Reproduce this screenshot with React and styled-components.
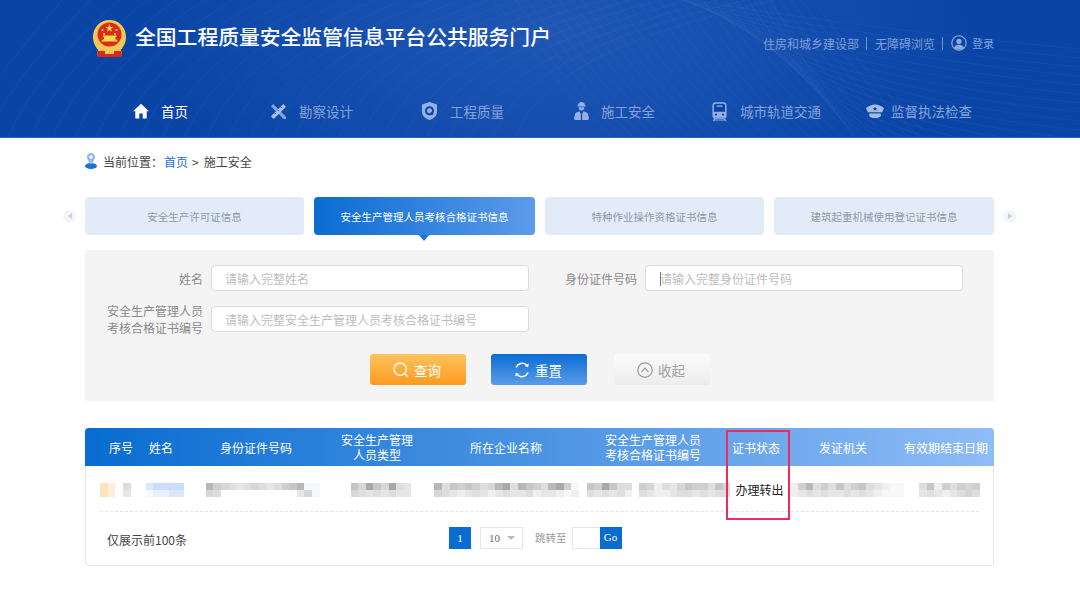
import React from 'react';
import styled, {createGlobalStyle} from 'styled-components';

const GlobalStyle = createGlobalStyle`
  html, body { margin: 0; padding: 0; background: #fff; }
  body { font-family: "Noto Sans CJK SC", "Liberation Sans", sans-serif; color: #333; }
  * { box-sizing: border-box; }
`;

const Page = styled.div`
  width: 1080px;
  height: 592px;
  overflow: hidden;
`;

// 顶部
const Header = styled.header`
  position: relative;
  height: 138px;
  overflow: hidden;
  background: radial-gradient(ellipse 420px 200px at 560px 30px, #2057b5 0%, rgba(32, 87, 181, 0) 100%), #0a45a6;
  border-bottom: 1px solid #2266c4;
`;
const Arcs = styled.svg`
  position: absolute;
  left: 0;
  top: 0;
  pointer-events: none;
`;
const TopBar = styled.div`
  position: relative;
  display: flex;
  align-items: flex-start;
  height: 91px;
  padding: 19px 86px 0 92px;
`;
const Title = styled.h1`
  margin: 3px 0 0 8px;
  font-size: 20.8px;
  line-height: 28px;
  font-weight: 500;
  color: #fff;
  white-space: nowrap;
`;
const TopLinks = styled.div`
  margin: 15px 0 0 auto;
  display: flex;
  align-items: center;
  height: 18px;
  font-size: 12px;
  color: #7f9fd6;
  white-space: nowrap;
`;
const Sep = styled.span`
  width: 1px;
  height: 13px;
  margin: 0 8px 0 7px;
  background: #6f92cf;
`;
const Login = styled.span`
  font-size: 11px;
  margin-left: 5px;
`;
const Nav = styled.nav`
  position: relative;
  display: flex;
  padding-left: 133px;
`;
const NavItem = styled.a`
  display: flex;
  align-items: center;
  width: ${p => p.$w}px;
  height: 40px;
  font-size: 13.5px;
  color: ${p => (p.$active ? '#fff' : '#86a4dc')};
  white-space: nowrap;
  svg {
    flex: none;
    margin-right: ${p => p.$gap}px;
  }
`;

// 面包屑
const Crumb = styled.div`
  display: flex;
  align-items: center;
  height: 18px;
  margin: 14px 0 0 85px;
  font-size: 12px;
  color: #444;
  svg { margin-right: 6px; }
`;
const CrumbLink = styled.a`
  color: #1a6fd0;
  margin: 0 4px 0 1px;
`;
const CrumbSep = styled.span`
  margin-right: 5px;
`;

// 选项卡
const TabRow = styled.div`
  display: flex;
  align-items: center;
  margin: 27px 0 0 63px;
`;
const Arrow = styled.span`
  flex: none;
  width: 13px;
  height: 13px;
  border-radius: 50%;
  background: #f3f5f9;
  display: flex;
  align-items: center;
  justify-content: center;
  margin: ${p => (p.$right ? '0 0 0 9px' : '0 9px 0 0')};
  &::before {
    content: '';
    border-style: solid;
    border-width: 3.5px 0 3.5px 4px;
    border-color: transparent transparent transparent #c6cede;
    transform: ${p => (p.$right ? 'none' : 'rotate(180deg)')};
  }
`;
const Tabs = styled.div`
  display: flex;
  gap: 10px;
`;
const Tab = styled.div`
  position: relative;
  width: ${p => p.$w}px;
  height: 38px;
  display: flex;
  align-items: center;
  justify-content: center;
  border-radius: 4px;
  font-size: 10.5px;
  color: ${p => (p.$active ? '#fff' : '#8f98a6')};
  background: ${p => (p.$active ? 'linear-gradient(90deg, #0a6cd2, #5c9aea)' : '#e2ecf9')};
  ${p => p.$active && `
    &::after {
      content: '';
      position: absolute;
      left: 105px;
      top: 38px;
      border-style: solid;
      border-width: 6px 5px 0 5px;
      border-color: #1b74d6 transparent transparent transparent;
    }
  `}
`;

// 查询表单
const Filter = styled.section`
  width: 909px;
  height: 151px;
  margin: 15px 0 0 85px;
  padding-top: 15px;
  background: #f4f4f4;
`;
const FormRow = styled.div`
  display: flex;
  margin-bottom: 11px;
`;
const Field = styled.label`
  display: flex;
  align-items: center;
  width: ${p => p.$w}px;
`;
const Label = styled.span`
  flex: none;
  width: ${p => p.$w}px;
  margin-right: 8px;
  text-align: right;
  font-size: 12px;
  line-height: 17px;
  color: #8a8a8a;
`;
const Input = styled.div`
  position: relative;
  width: 318px;
  height: 26px;
  padding-left: ${p => p.$pad}px;
  display: flex;
  align-items: center;
  background: #fff;
  border: 1px solid #dcdcdc;
  border-radius: 4px;
  font-size: 12px;
  color: #bdbdbd;
  white-space: nowrap;
`;
const Caret = styled.i`
  position: absolute;
  left: 14px;
  top: 6px;
  width: 1px;
  height: 14px;
  background: #777;
`;
const Buttons = styled.div`
  display: flex;
  margin: 18px 0 0 285px;
`;
const Button = styled.button`
  width: 96px;
  height: 31px;
  margin-right: ${p => p.$mr}px;
  padding: 0 2px 0 0;
  display: flex;
  align-items: center;
  justify-content: center;
  gap: 5px;
  border: 0;
  border-radius: 3px;
  font: inherit;
  font-size: 13.5px;
  color: ${p => p.$color};
  background: ${p => p.$bg};
`;

// 表格
const Card = styled.section`
  position: relative;
  width: 909px;
  height: 138px;
  margin: 27px 0 0 85px;
  border: 1px solid #e6e6e6;
  border-top: 0;
  border-radius: 4px;
`;
const THead = styled.div`
  display: grid;
  grid-template-columns: 40px 40px 150px 92px 166px 128px 78px 96px 103px;
  margin: 0 -1px;
  height: 38px;
  align-items: center;
  padding-left: 16px;
  border-radius: 4px 4px 0 0;
  background: linear-gradient(90deg, #086cd0, #8fbcf6);
  color: #fff;
  font-size: 12px;
  line-height: 15px;
  text-align: center;
`;
const Th = styled.div`
  ${p => p.$last && 'text-align: right; padding-right: 6px; white-space: nowrap;'}
`;
const TRow = styled.div`
  display: flex;
  align-items: center;
  height: 46px;
  margin: 0 14px;
  border-bottom: 1px dashed #e3e3e3;
`;
const Mosaic = styled.div`
  display: grid;
  flex: none;
  grid-template-columns: repeat(${p => p.$n}, 7.6px);
  grid-auto-rows: 7px;
  margin-left: ${p => p.$ml}px;
  margin-top: 2px;
`;
const Pixel = styled.i.attrs(p => ({style: {background: p.$c}}))`
  display: block;
`;
const Status = styled.span`
  flex: none;
  margin: 2px 0 0 5px;
  width: 49px;
  font-size: 12px;
  color: #222;
  white-space: nowrap;
`;
const TFoot = styled.div`
  display: flex;
  align-items: center;
  height: 53px;
  padding-left: 21px;
`;
const Count = styled.span`
  width: 342px;
  margin-top: 2px;
  font-size: 12px;
  color: #444;
  white-space: nowrap;
`;
const PageNo = styled.span`
  width: 22px;
  height: 22px;
  margin-top: -2px;
  background: #086cd0;
  color: #fff;
  font: 11px/22px "Liberation Serif", serif;
  text-align: center;
`;
const PageSize = styled.span`
  width: 43px;
  height: 22px;
  margin: -2px 12px 0 9px;
  padding-left: 8px;
  display: flex;
  align-items: center;
  border: 1px solid #e6e6e6;
  font: 11px "Liberation Serif", serif;
  color: #666;
  &::after {
    content: '';
    margin-left: 7px;
    border-style: solid;
    border-width: 4px 4px 0 4px;
    border-color: #a8bdd8 transparent transparent transparent;
  }
`;
const Jump = styled.span`
  margin: -2px 5px 0 0;
  font-size: 10.5px;
  color: #999;
  white-space: nowrap;
`;
const JumpInput = styled.span`
  width: 28px;
  height: 22px;
  margin-top: -2px;
  border: 1px solid #e6e6e6;
  border-right: 0;
`;
const GoBtn = styled.span`
  width: 22px;
  height: 22px;
  margin-top: -2px;
  background: #086cd0;
  color: #fff;
  font: 11px/21px "Liberation Serif", serif;
  text-align: center;
`;
const Highlight = styled.div`
  position: absolute;
  left: 640px;
  top: 2px;
  width: 64px;
  height: 90px;
  border: 2px solid #ee2b5c;
  pointer-events: none;
`;

const shade = {
  a: '#f8f8f9', b: '#efefef', c: '#e6e6e6', d: '#dedede', e: '#d6d6d6',
  f: '#cfcfcf', g: '#c6c6c6', h: '#b8b8b8', i: '#a8a8a8', j: '#9a9a9a', w: '#ffffff',
  o: '#fde3bd', p: '#fdeedb', q: '#c9def8', r: '#dbe8fa', s: '#e9f1fc', t: '#f5f9fe'
};

const Blur = ({rows, ml}) => {
  const n = rows[0].length;
  return (
    <Mosaic $n={n} $ml={ml}>
      {rows.join('').split('').map((k, i) => (
        <Pixel key={i} $c={shade[k]} />
      ))}
    </Mosaic>
  );
};

const Arc = () => {
  // 放射状的细线
  const lines = [];
  for (let i = 0; i < 26; i++) {
    const x = -40 + i * 22;
    lines.push(`M${x} 150 C ${x + 20} 90, ${x + 70} 40, ${x + 110 + i * 8} -10`);
  }
  for (let i = 0; i < 22; i++) {
    const y = 10 + i * 9;
    lines.push(`M${640 + i * 6} -10 C ${720 + i * 6} ${y * 0.7}, ${880} ${y + 20}, 1090 ${y + 40}`);
  }
  for (let i = 0; i < 30; i++) {
    const x = 520 + i * 11;
    lines.push(`M${x - 30} -5 C ${x + 10} 50, ${x + 50} 100, ${x + 100} 145`);
  }
  return (
    <Arcs width="1080" height="138" viewBox="0 0 1080 138" fill="none" stroke="#5c8ad6" strokeWidth="0.8" strokeOpacity="0.13">
      {lines.map((d, i) => <path key={i} d={d} />)}
    </Arcs>
  );
};

const Emblem = () => (
  <svg width="35" height="38" viewBox="0 0 35 38">
    <path d="M17.500 1C8 1 1 8.500 1 18c0 5.500 2.500 10 5.500 13L5 32.500 6 38h23l1-5.500-1.500-1.500c3-3 5.500-7.500 5.500-13C34 8.500 27 1 17.500 1z" fill="#f1ca55" />
    <circle cx="17.500" cy="15.500" r="12" fill="#dd2a1e" />
    <path d="M17.500 5l1 3h3l-2.500 1.800 1 3-2.500-1.800-2.500 1.800 1-3L13.500 8h3z" fill="#f8d94a" />
    <circle cx="10.500" cy="11" r="1.100" fill="#f8d94a" />
    <circle cx="24.500" cy="11" r="1.100" fill="#f8d94a" />
    <circle cx="12" cy="15" r="1.100" fill="#f8d94a" />
    <circle cx="23" cy="15" r="1.100" fill="#f8d94a" />
    <path d="M9 22.500h17l-1.500-2h-1v-2.500h1v-1.500H11V18h1v2.500h-1z" fill="#f8d94a" />
    <path d="M4 24c3 4 8 6 13.500 6S28 28 31 24l-1 6-12.500 2L5 30z" fill="#f1ca55" />
    <path d="M5 32h25l-1 6H6z" fill="#d8281c" />
    <path d="M13 32h9v3h-9z" fill="#f1ca55" />
  </svg>
);

const HomeIcon = () => (
  <svg width="16" height="16" viewBox="0 0 16 16" fill="#fff">
    <path d="M8 .8L0 8.200h2.300V15.500h4V10.500h3.400v5h4V8.200H16z" />
  </svg>
);
const ToolIcon = () => (
  <svg width="17" height="17" viewBox="0 0 17 17" fill="none">
    <path d="M1 3.200L3.200 1l13 13-.4 1.900-1.900.4z" fill="#86a4dc" />
    <path d="M1 13.300L13.300 1 16 3.700 3.700 16z" fill="#a9c0ea" />
    <path d="M4.500 9.800l1.300 1.300M7.500 6.800l1.300 1.300M10.500 3.800l1.300 1.300" stroke="#0a45a6" strokeWidth="1" />
  </svg>
);
const ShieldIcon = () => (
  <svg width="17" height="18" viewBox="0 0 17 18">
    <path d="M8.500 0L16 2.500v7.500c0 4-3.500 6.800-7.500 8C4.500 16.800 1 14 1 10V2.500z" fill="#96b0e4" />
    <circle cx="8.500" cy="8.800" r="3.500" fill="none" stroke="#0a45a6" strokeWidth="2" />
    <path d="M10 10.500l2 1.800" stroke="#0a45a6" strokeWidth="1.600" />
  </svg>
);
const WorkerIcon = () => (
  <svg width="17" height="19" viewBox="0 0 17 19" fill="#96b0e4">
    <path d="M8.500 0C6.500 0 5 1.500 5 3.600H4.300v1h8.400v-1H12C12 1.500 10.500 0 8.500 0z" />
    <path d="M5.600 5.300h5.800c0 2-1.200 3.200-2.900 3.200S5.600 7.300 5.600 5.300z" />
    <path d="M6.500 9.300L2.500 11 1.200 15.500c-.3 1.200 0 2.500 1.300 2.500h5.300V12zM10.500 9.300l4 1.700 1.300 4.500c.3 1.200 0 2.500-1.300 2.500H9.200V12z" />
  </svg>
);
const TrainIcon = () => (
  <svg width="17" height="19" viewBox="0 0 17 19" fill="none">
    <rect x="2.200" y="1" width="12.600" height="15" rx="2.400" fill="#0a45a6" stroke="#96b0e4" strokeWidth="1.500" />
    <rect x="2.500" y="9.800" width="12" height="5.800" rx="1.500" fill="#96b0e4" />
    <rect x="5.500" y="3.400" width="6" height="1.300" fill="#96b0e4" />
    <circle cx="5" cy="12.600" r="1.100" fill="#0a45a6" />
    <circle cx="12" cy="12.600" r="1.100" fill="#0a45a6" />
    <path d="M4 16l-2 3M13 16l2 3M3 18h11" stroke="#96b0e4" strokeWidth="1.100" />
  </svg>
);
const CapIcon = () => (
  <svg width="18" height="15" viewBox="0 0 18 15" fill="#a4bbe8">
    <path d="M0 4.200C3 1.800 6 .6 9 .6s6 1.200 9 3.600l-1.800 4H1.800z" />
    <path d="M3.200 9.400h11.600v2c0 .8-.4 1.200-1 1.500-2.900 1.600-6.700 1.600-9.600 0-.6-.3-1-.7-1-1.500z" />
    <path d="M9 2.600l.7 1.400 1.500.1-1.100 1 .3 1.500L9 5.900l-1.400.7.3-1.500-1.100-1 1.500-.1z" fill="#0a45a6" />
  </svg>
);
const UserIcon = () => (
  <svg width="16" height="16" viewBox="0 0 16 16" fill="none" stroke="#8fabde" strokeWidth="1.100">
    <circle cx="8" cy="8" r="7.200" />
    <circle cx="8" cy="6.300" r="2.600" fill="#8fabde" stroke="none" />
    <path d="M3 13c.8-2.200 2.700-3.300 5-3.300s4.200 1.100 5 3.300C11.500 15 4.500 15 3 13z" fill="#8fabde" stroke="none" />
  </svg>
);
const PinIcon = () => (
  <svg width="12" height="16" viewBox="0 0 12 16">
    <ellipse cx="6" cy="13" rx="6" ry="3" fill="#1a6fd0" />
    <path d="M6 0C3.500 0 2 1.800 2 4c0 2.800 2.500 5.500 4 7.500 1.500-2 4-4.700 4-7.500 0-2.200-1.500-4-4-4z" fill="#8dbbef" />
    <circle cx="6" cy="4" r="1.700" fill="#fff" />
  </svg>
);
const SearchIcon = () => (
  <svg width="16" height="16" viewBox="0 0 16 16" fill="none" stroke="#fff" strokeWidth="1.300">
    <circle cx="7.200" cy="7.200" r="6.200" />
    <path d="M11.800 11.800l3 3" />
  </svg>
);
const RefreshIcon = () => (
  <svg width="16" height="16" viewBox="0 0 16 16" fill="none" stroke="#fff" strokeWidth="1.500">
    <path d="M2 5.500A6.800 6.800 0 0 1 12.500 2.800" />
    <path d="M14 10.500A6.800 6.800 0 0 1 3.500 13.200" />
    <path d="M14.800 1.500l-.6 3.800-3.600-1.200z" fill="#fff" stroke="none" />
    <path d="M1.200 14.500l.6-3.800 3.600 1.200z" fill="#fff" stroke="none" />
  </svg>
);
const CollapseIcon = () => (
  <svg width="16" height="16" viewBox="0 0 16 16" fill="none" stroke="#9a9a9a" strokeWidth="1.200">
    <circle cx="8" cy="8" r="7.200" />
    <path d="M4.500 9.800L8 6.200l3.500 3.600" />
  </svg>
);

const navItems = [
  {text: '首页', w: 137, gap: 12, icon: <HomeIcon />, active: true},
  {text: '勘察设计', w: 151, gap: 12, icon: <ToolIcon />},
  {text: '工程质量', w: 152, gap: 12, icon: <ShieldIcon />},
  {text: '施工安全', w: 138, gap: 11, icon: <WorkerIcon />},
  {text: '城市轨道交通', w: 155, gap: 12, icon: <TrainIcon />},
  {text: '监督执法检查', w: 120, gap: 7, icon: <CapIcon />}
];

const App = () => {
  return (
    <Page>
      <GlobalStyle />
      <Header>
        <Arc />
        <TopBar>
          <Emblem />
          <Title>全国工程质量安全监管信息平台公共服务门户</Title>
          <TopLinks>
            住房和城乡建设部
            <Sep />
            无障碍浏览
            <Sep />
            <UserIcon />
            <Login>登录</Login>
          </TopLinks>
        </TopBar>
        <Nav>
          {navItems.map(item => (
            <NavItem key={item.text} $w={item.w} $gap={item.gap} $active={item.active}>
              {item.icon}
              {item.text}
            </NavItem>
          ))}
        </Nav>
      </Header>

      <Crumb>
        <PinIcon />
        当前位置：<CrumbLink>首页</CrumbLink><CrumbSep>&gt;</CrumbSep>施工安全
      </Crumb>

      <TabRow>
        <Arrow />
        <Tabs>
          <Tab $w={219}>安全生产许可证信息</Tab>
          <Tab $w={221} $active>安全生产管理人员考核合格证书信息</Tab>
          <Tab $w={219}>特种作业操作资格证书信息</Tab>
          <Tab $w={220}>建筑起重机械使用登记证书信息</Tab>
        </Tabs>
        <Arrow $right />
      </TabRow>

      <Filter>
        <FormRow>
          <Field $w={480}>
            <Label $w={118}>姓名</Label>
            <Input $pad={13}>请输入完整姓名</Input>
          </Field>
          <Field>
            <Label $w={72}>身份证件号码</Label>
            <Input $pad={14}>
              <Caret />
              请输入完整身份证件号码
            </Input>
          </Field>
        </FormRow>
        <FormRow>
          <Field $w={480}>
            <Label $w={118}>安全生产管理人员<br />考核合格证书编号</Label>
            <Input $pad={13}>请输入完整安全生产管理人员考核合格证书编号</Input>
          </Field>
        </FormRow>
        <Buttons>
          <Button $mr={25} $color="#fff" $bg="linear-gradient(180deg, #fdc35e, #fe9a1f)">
            <SearchIcon />查询
          </Button>
          <Button $mr={27} $color="#fff" $bg="linear-gradient(180deg, #0a6cd2, #5b9cea)">
            <RefreshIcon />重置
          </Button>
          <Button $color="#a0a0a0" $bg="linear-gradient(180deg, #fbfbfb, #ececec)">
            <CollapseIcon />收起
          </Button>
        </Buttons>
      </Filter>

      <Card>
        <THead>
          <Th>序号</Th>
          <Th>姓名</Th>
          <Th>身份证件号码</Th>
          <Th>安全生产管理<br />人员类型</Th>
          <Th>所在企业名称</Th>
          <Th>安全生产管理人员<br />考核合格证书编号</Th>
          <Th>证书状态</Th>
          <Th>发证机关</Th>
          <Th $last>有效期结束日期</Th>
        </THead>
        <TRow>
          <Blur ml={0} rows={['op', 'op']} />
          <Blur ml={8} rows={['d', 'c']} />
          <Blur ml={15} rows={['rqqqq', 'tssrr']} />
          <Blur ml={22} rows={['hfedcdedcdfghta', 'edwwwwwwwwwwcet']} />
          <Blur ml={31} rows={['geigeidc', 'edcdcdcc']} />
          <Blur ml={23} rows={['hdgfgfdehidhgfdhifa', 'edcbcdcbcdccdbccbab']} />
          <Blur ml={8} rows={['gfigdd', 'dcdcdb']} />
          <Blur ml={7} rows={['febdcegffdge', 'dcbbcddcdcdd']} />
          <Status>办理转出</Status>
          <Blur ml={6} rows={['bfhdfdgdfgdcbaa', 'bcdcdccdcdcbaaa']} />
          <Blur ml={15} rows={['dgbfdfef', 'cdcbcded']} />
        </TRow>
        <TFoot>
          <Count>仅展示前100条</Count>
          <PageNo>1</PageNo>
          <PageSize>10</PageSize>
          <Jump>跳转至</Jump>
          <JumpInput />
          <GoBtn>Go</GoBtn>
        </TFoot>
        <Highlight />
      </Card>
    </Page>
  );
};

export default App;
